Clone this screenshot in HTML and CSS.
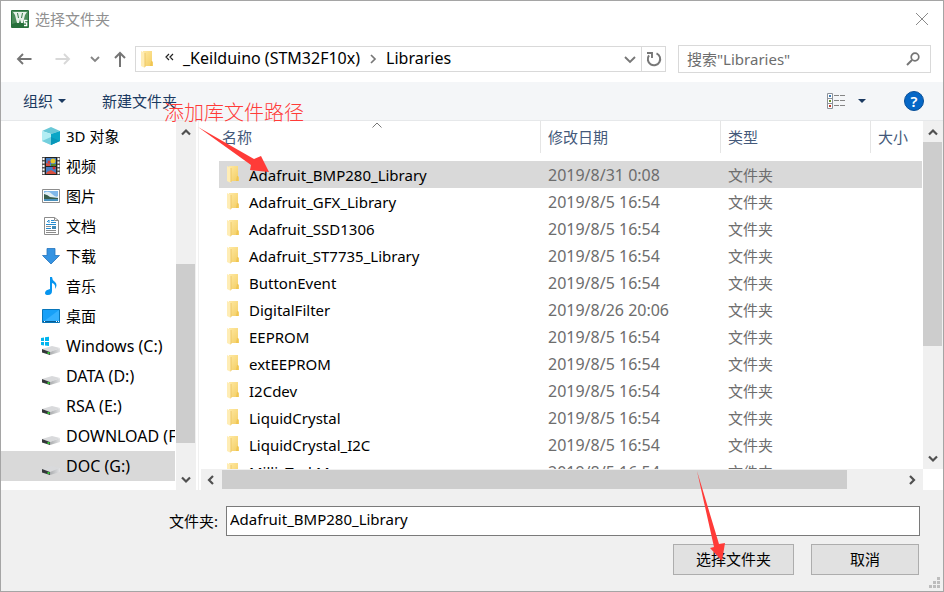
FILE: index.html
```html
<!DOCTYPE html>
<html lang="zh-CN">
<head>
<meta charset="utf-8">
<title>选择文件夹</title>
<link rel="stylesheet" href="styles.css">
</head>
<body>
<svg class="defs" aria-hidden="true">
  <defs>
    <linearGradient id="gold" x1="0" y1="0" x2="1" y2="1"><stop offset="0" stop-color="#ffe9a3"/><stop offset="1" stop-color="#f3cd62"/></linearGradient>
    <linearGradient id="metal" x1="0" y1="0" x2="1" y2="0"><stop offset="0" stop-color="#aaacae"/><stop offset="1" stop-color="#e2e3e5"/></linearGradient>
    <symbol id="folder" viewBox="0 0 14 18"><path d="M3 1h9v10l1 1v4H4z" fill="url(#gold)"/><path d="M11 11h1v5h-2z" fill="#f0c552"/><path d="M1 1l4 2v15L1 16z" fill="#ffedb5"/><path d="M5 3v14" stroke="#edc766" fill="none"/></symbol>
    <symbol id="drive" viewBox="0 0 20 20"><path d="M1 13l10-3 8 2-10 4z" fill="#d9dadc"/><path d="M9 16l10-4v4l-10 3z" fill="url(#metal)"/><path d="M1 13l8 3v3l-8-2.500z" fill="#34373a"/><path d="M6.500 16h2v2h-2z" fill="#35c935"/></symbol>
    <symbol id="up" viewBox="0 0 12 12"><path d="M2 8.500l4-4 4 4" fill="none" stroke="#505050" stroke-width="2.200"/></symbol>
    <symbol id="down" viewBox="0 0 12 12"><path d="M2 3.500l4 4 4-4" fill="none" stroke="#505050" stroke-width="2.200"/></symbol>
    <symbol id="left" viewBox="0 0 12 12"><path d="M8 2L4 6l4 4" fill="none" stroke="#505050" stroke-width="2.200"/></symbol>
    <symbol id="right" viewBox="0 0 12 12"><path d="M4 2l4 4-4 4" fill="none" stroke="#505050" stroke-width="2.200"/></symbol>
  </defs>
</svg>

<main class="dialog">
  <header class="titlebar">
    <svg class="app-icon" viewBox="0 0 18 18" aria-hidden="true"><rect width="18" height="18" rx="1" fill="#27703b"/><path d="M1 1h16v8L1 14z" fill="#4b8d5a"/><path d="M2 2h14l-2 3-2 8h-2L9 9l-1 4H6L4 5z" fill="#e8f1e9"/><path d="M6.500 3l1 5M11.500 3l-1 5" stroke="#387c49"/><path d="M16.500 10.500h-3v2.300h2.200v2.700h-2.700" fill="none" stroke="#fff" stroke-width="1.300"/></svg>
    <h1>选择文件夹</h1>
    <button class="close" aria-label="关闭"><svg viewBox="0 0 14 14"><path d="M1 1l12 12M13 1L1 13" stroke="#8a8a8a" fill="none"/></svg></button>
  </header>

  <nav class="navbar">
    <div class="history">
      <button aria-label="后退"><svg viewBox="0 0 16 14"><path d="M15.500 7H2M7 2L2 7l5 5" fill="none" stroke="#757575" stroke-width="1.900"/></svg></button>
      <button aria-label="前进"><svg viewBox="0 0 16 14"><path d="M.5 7H14M9 2l5 5-5 5" fill="none" stroke="#d8d8d8" stroke-width="1.900"/></svg></button>
      <button class="recent" aria-label="最近"><svg viewBox="0 0 10 14"><path d="M1 5l4 4 4-4" fill="none" stroke="#858585" stroke-width="1.900"/></svg></button>
      <button class="parent" aria-label="上移"><svg viewBox="0 0 12 16"><path d="M6 16V2M1 7l5-5 5 5" fill="none" stroke="#757575" stroke-width="2"/></svg></button>
    </div>
    <div class="address">
      <svg class="folder" aria-hidden="true"><use href="#folder"/></svg>
      <svg class="more" viewBox="0 0 9 8" aria-hidden="true"><path d="M4 1L1 4l3 3M8 1L5 4l3 3" fill="none" stroke="#222" stroke-width="1.200"/></svg>
      <a href="#">_Keilduino (STM32F10x)</a>
      <svg class="crumb" viewBox="0 0 8 10" aria-hidden="true"><path d="M2 1l4 4-4 4" fill="none" stroke="#777" stroke-width="1.700"/></svg>
      <a href="#">Libraries</a>
      <button class="drop" aria-label="展开"><svg viewBox="0 0 12 12"><path d="M1 4l5 5 5-5" fill="none" stroke="#777" stroke-width="1.900"/></svg></button>
      <button class="refresh" aria-label="刷新"><svg viewBox="0 0 16 16"><path d="M10.500 2.400A6.200 6.200 0 1 1 3 4.400" fill="none" stroke="#777" stroke-width="2"/><path d="M1 2h5v5" fill="none" stroke="#777" stroke-width="1.900"/></svg></button>
    </div>
    <label class="search">
      <input type="text" placeholder='搜索"Libraries"' aria-label="搜索">
      <svg viewBox="0 0 14 14" aria-hidden="true"><circle cx="9" cy="5" r="3.800" fill="none" stroke="#757575" stroke-width="1.700"/><path d="M6 8l-5 5" stroke="#757575" stroke-width="2"/></svg>
    </label>
  </nav>

  <div class="toolbar">
    <button>组织<svg class="caret" viewBox="0 0 8 4" aria-hidden="true"><path d="M0 0h8L4 4z" fill="#1b3a61"/></svg></button>
    <button>新建文件夹</button>
    <button class="view" aria-label="更改视图"><svg class="view-icon" viewBox="0 0 19 16"><path d="M.5.500h5v15h-5zM.5 5.500h5M.5 10.500h5" fill="#fff" stroke="#8c9299"/><path d="M2 2h2v2H2z" fill="#3b7cb8"/><path d="M2 7h2v2H2z" fill="#69922f"/><path d="M2 12h2v2H2z" fill="#c03a2a"/><path d="M7 2.500h5m1 0h5M7 7.500h5m1 0h5M7 12.500h5m1 0h5" stroke="#858585"/></svg><svg class="caret" viewBox="0 0 8 4"><path d="M0 0h8L4 4z" fill="#1b3a61"/></svg></button>
    <button class="help" aria-label="帮助">?</button>
  </div>

  <div class="content">
    <aside class="sidebar">
      <ul class="places">
        <li><a href="#"><svg viewBox="0 0 20 20"><path d="M1 5l9-4 9 4-9 3z" fill="#69c8d7"/><path d="M1 5l9 3v11l-9-4z" fill="#b2edf3"/><path d="M10 8l9-3v10l-9 4z" fill="#0aa6c6"/><path d="M1 15l9-4v8z" fill="#74cfdd"/><path d="M10 11l9 4-9 4z" fill="#0797ba"/></svg>3D 对象</a></li>
        <li><a href="#"><svg viewBox="0 0 20 20"><path d="M1 1h18v18H1z" fill="#555"/><path d="M4 1h12v18H4z" fill="#222"/><path d="M5 2h10v8H5zM5 11h10v7H5z" fill="#467fc5"/><path d="M5 7l4 1v2H5zM6 16l4-2 5 3v1H5z" fill="#d9503f"/><circle cx="12" cy="5" r="2.500" fill="#e5c62c"/><circle cx="8" cy="6" r="1.500" fill="#d93c34"/><path d="M10 8h5v2h-5z" fill="#55872b"/><circle cx="13" cy="12" r="1.500" fill="#d92929"/><path d="M2.500 2v17M17.500 2v17" stroke="#fff" stroke-width="2" stroke-dasharray="2 1.500"/></svg>视频</a></li>
        <li><a href="#"><svg viewBox="0 0 20 20"><path d="M1.500 3.500h17v13h-17z" fill="#fff" stroke="#8d8d8d"/><path d="M3 5h14v10H3z" fill="#80b8ea"/><path d="M3 7q4-3 8 1t6 2v3H3z" fill="#deedf4"/><path d="M3 8q4 1 6 3l8 1v1H3z" fill="#385e4d"/><path d="M3 13h14v2H3z" fill="#4a91bd"/></svg>图片</a></li>
        <li><a href="#"><svg viewBox="0 0 20 20"><path d="M3.500 1.500h10l4 3v14h-14z" fill="#fff" stroke="#8c8c8c"/><path d="M13.500 1.500v3h4" fill="none" stroke="#8c8c8c"/><path d="M6 6l2-2v3M10 4.500h3M10 6.500h5M5 8.500h10M5 12.500h5" stroke="#258bd0" fill="none"/><path d="M11 10h4v3h-4z" fill="#4089b7"/><path d="M5 10.500h5M5 14.500h10M5 16.500h10" stroke="#8b8b8b"/></svg>文档</a></li>
        <li><a href="#"><svg viewBox="0 0 20 20"><path d="M6 2.500h8v7h4.500L10 18 1.500 9.500H6z" fill="#3493e2" stroke="#2574bc" stroke-width=".8"/></svg>下载</a></li>
        <li><a href="#"><svg viewBox="0 0 20 20"><path d="M9 1h2q0 3 3 5 3 3 0 7 1-5-3-6v8q0 4-4 4-3 0-3-2 0-3 5-4z" fill="#0795ef"/></svg>音乐</a></li>
        <li><a href="#"><svg viewBox="0 0 20 20"><path d="M1.500 3.500h17v13h-17z" fill="#17a0f8" stroke="#0876ba"/><path d="M2 16L18 4v12z" fill="#35b1ff"/><path d="M2 15.500h16" stroke="#075b92"/><path d="M3 15.500h1m11 0h1m1 0h1" stroke="#fff"/></svg>桌面</a></li>
        <li class="drive"><a href="#"><svg viewBox="0 0 20 20"><use href="#drive"/><path d="M0 2l3-.5V5H0zm4-.7L8 .8V5H4zM0 6h3v3.500L0 9zm4 0h4v4l-4-.5z" fill="#00b5ef"/></svg>Windows (C:)</a></li>
        <li class="drive"><a href="#"><svg viewBox="0 0 20 20"><use href="#drive"/></svg>DATA (D:)</a></li>
        <li class="drive"><a href="#"><svg viewBox="0 0 20 20"><use href="#drive"/></svg>RSA (E:)</a></li>
        <li class="drive"><a href="#"><svg viewBox="0 0 20 20"><use href="#drive"/></svg>DOWNLOAD (F:)</a></li>
        <li class="drive selected"><a href="#"><svg viewBox="0 0 20 20"><use href="#drive"/></svg>DOC (G:)</a></li>
      </ul>
      <div class="scroll vertical places-scroll"><button aria-label="向上"><svg><use href="#up"/></svg></button><i class="before"></i><i class="thumb"></i><i class="after"></i><button aria-label="向下"><svg><use href="#down"/></svg></button></div>
    </aside>

    <section class="files">
      <div class="viewport">
        <svg class="sort" viewBox="0 0 10 6" aria-hidden="true"><path d="M.5 5.500L5 1l4.500 4.500" fill="none" stroke="#777"/></svg>
        <table>
          <thead><tr><th class="name"><span>名称</span></th><th class="date"><span>修改日期</span></th><th class="type"><span>类型</span></th><th><span>大小</span></th></tr></thead>
          <tbody>
            <tr class="selected"><td><svg class="folder"><use href="#folder"/></svg>Adafruit_BMP280_Library</td><td>2019/8/31 0:08</td><td>文件夹</td><td></td></tr>
            <tr><td><svg class="folder"><use href="#folder"/></svg>Adafruit_GFX_Library</td><td>2019/8/5 16:54</td><td>文件夹</td><td></td></tr>
            <tr><td><svg class="folder"><use href="#folder"/></svg>Adafruit_SSD1306</td><td>2019/8/5 16:54</td><td>文件夹</td><td></td></tr>
            <tr><td><svg class="folder"><use href="#folder"/></svg>Adafruit_ST7735_Library</td><td>2019/8/5 16:54</td><td>文件夹</td><td></td></tr>
            <tr><td><svg class="folder"><use href="#folder"/></svg>ButtonEvent</td><td>2019/8/5 16:54</td><td>文件夹</td><td></td></tr>
            <tr><td><svg class="folder"><use href="#folder"/></svg>DigitalFilter</td><td>2019/8/26 20:06</td><td>文件夹</td><td></td></tr>
            <tr><td><svg class="folder"><use href="#folder"/></svg>EEPROM</td><td>2019/8/5 16:54</td><td>文件夹</td><td></td></tr>
            <tr><td><svg class="folder"><use href="#folder"/></svg>extEEPROM</td><td>2019/8/5 16:54</td><td>文件夹</td><td></td></tr>
            <tr><td><svg class="folder"><use href="#folder"/></svg>I2Cdev</td><td>2019/8/5 16:54</td><td>文件夹</td><td></td></tr>
            <tr><td><svg class="folder"><use href="#folder"/></svg>LiquidCrystal</td><td>2019/8/5 16:54</td><td>文件夹</td><td></td></tr>
            <tr><td><svg class="folder"><use href="#folder"/></svg>LiquidCrystal_I2C</td><td>2019/8/5 16:54</td><td>文件夹</td><td></td></tr>
            <tr><td><svg class="folder"><use href="#folder"/></svg>MillisTaskManager</td><td>2019/8/5 16:54</td><td>文件夹</td><td></td></tr>
          </tbody>
        </table>
      </div>
      <div class="scroll vertical files-scroll"><button aria-label="向上"><svg><use href="#up"/></svg></button><i class="thumb"></i><i class="after"></i><button aria-label="向下"><svg><use href="#down"/></svg></button></div>
      <div class="scroll horizontal"><button aria-label="向左"><svg><use href="#left"/></svg></button><i class="thumb"></i><i class="after"></i><button aria-label="向右"><svg><use href="#right"/></svg></button></div>
    </section>
  </div>

  <footer class="footer">
    <div class="field"><label for="folder-name">文件夹:</label><input id="folder-name" type="text" value="Adafruit_BMP280_Library"></div>
    <div class="actions"><button class="choose">选择文件夹</button><button class="cancel">取消</button></div>
    <svg class="grip" viewBox="0 0 11 11" aria-hidden="true"><path d="M8 0h3v3H8zM4 4h3v3H4zM8 4h3v3H8zM0 8h3v3H0zM4 8h3v3H4zM8 8h3v3H8z" fill="#bdbdbd"/></svg>
  </footer>

  <p class="note">添加库文件路径</p>
  <svg class="arrow arrow-list" viewBox="0 0 72 46" aria-hidden="true"><path d="M0 0l56 32 7-3 8 16-19-2 1-5z" fill="#ff3b38"/></svg>
  <svg class="arrow arrow-button" viewBox="0 0 30 91" aria-hidden="true"><path d="M0 0l22 73 6-1-3 18-12-13 4-1z" fill="#ff3b38"/></svg>
</main>
</body>
</html>
```
FILE: styles.css
```css
* { box-sizing: border-box; }

body {
  margin: 0;
  font: 15px/20px "Noto Sans", "Noto Sans CJK SC", sans-serif;
  color: #000;
}

button, input { font: inherit; color: inherit; }
button { padding: 0; border: 0; background: none; }
a { color: inherit; text-decoration: none; }
svg { display: block; flex: none; }
.defs { position: absolute; width: 0; height: 0; }

.dialog {
  position: relative;
  display: flex;
  flex-direction: column;
  height: 100vh;
  border: 1px solid #a5a5a5;
  background: #fff;
  overflow: hidden;
}

/* Title bar */
.titlebar {
  display: flex;
  align-items: center;
  height: 36px;
  padding: 0 14px 0 10px;
}
.app-icon { width: 18px; height: 18px; }
h1 { margin: 0 auto 0 6px; font-size: 15px; font-weight: 400; color: #909090; }
.close svg { width: 14px; height: 14px; }

/* Navigation */
.navbar {
  display: flex;
  align-items: center;
  height: 45px;
  padding: 0 12px 1px 15px;
}
.history { display: flex; align-items: center; width: 119px; }
.history button { margin-right: 23px; }
.history svg { width: 16px; height: 14px; }
.history .recent { margin: 0 14px 0 -4px; }
.history .recent svg { width: 10px; }
.history .parent { margin: 0; }
.history .parent svg { width: 12px; height: 16px; }
.address {
  display: flex;
  align-items: center;
  flex: 1;
  height: 26px;
  border: 1px solid #d9d9d9;
}
.folder { width: 14px; height: 18px; }
.address .folder { margin-left: 4px; }
.address a { padding-bottom: 2px; font-size: 16px; }
.more { width: 9px; height: 8px; margin: 0 9px 4px 11px; }
.crumb { width: 8px; height: 10px; margin: 0 9px; }
.drop { margin-left: auto; padding: 0 5px; }
.drop svg { width: 12px; height: 12px; }
.refresh {
  display: flex;
  align-items: center;
  justify-content: center;
  width: 24px;
  height: 24px;
  border-left: 1px solid #d9d9d9;
}
.refresh svg { width: 16px; height: 16px; }
.search {
  display: flex;
  align-items: center;
  width: 253px;
  height: 28px;
  margin-left: 12px;
  padding: 0 10px 0 8px;
  border: 1px solid #d9d9d9;
}
.search input { flex: 1; min-width: 0; padding: 0; border: 0; outline: 0; background: none; }
.search input::placeholder { color: #6d6d6d; opacity: 1; }
.search svg { width: 14px; height: 14px; }

/* Toolbar */
.toolbar {
  display: flex;
  align-items: center;
  height: 39px;
  padding: 0 19px 0 22px;
  border-bottom: 1px solid #e6e8ea;
  background: #f4f6f8;
  color: #1b3a61;
}
.toolbar button { display: flex; align-items: center; margin-right: 36px; }
.caret { width: 8px; height: 4px; margin-left: 5px; }
.toolbar .view { margin: 0 38px 0 auto; }
.view-icon { width: 19px; height: 16px; }
.view .caret { margin-left: 12px; }
.toolbar .help {
  justify-content: center;
  width: 20px;
  height: 20px;
  margin: 0;
  border: 1px solid #084f98;
  border-radius: 50%;
  background: #0567c6;
  color: #fff;
  font-weight: 600;
}

/* Content panes */
.content { display: flex; flex: 1; min-height: 0; }
.sidebar { display: flex; width: 198px; padding-right: 2px; border-right: 1px solid #f0f0f0; }
.places { flex: 1; min-width: 0; margin: 0 1px 0 0; padding: 0; list-style: none; overflow: hidden; }
.places a {
  display: flex;
  align-items: center;
  gap: 5px;
  height: 30px;
  padding-left: 40px;
  white-space: nowrap;
}
.places svg { width: 20px; height: 20px; }
.drive { font-size: 16px; }
.selected { background: #d9d9d9; }

.files {
  display: grid;
  grid-template: minmax(0, 1fr) 21px / minmax(0, 1fr) 20px;
  flex: 1;
  min-width: 0;
  padding-left: 2px;
}
.viewport { position: relative; padding: 0 1px 0 18px; overflow: hidden; }
.sort { position: absolute; top: 1px; left: 171px; width: 10px; height: 6px; }
table { width: 100%; table-layout: fixed; border-collapse: collapse; }
th, td { padding: 0; text-align: left; font-weight: 400; white-space: nowrap; }
th { height: 40px; padding: 0 0 8px; color: #44597a; }
th span { display: block; height: 32px; padding-left: 7px; border-left: 1px solid #e5e5e5; line-height: 32px; }
.name { width: 321px; }
.name span { padding-left: 2px; border-color: transparent; }
.date { width: 180px; }
.type { width: 150px; }
td { height: 27px; padding-left: 8px; color: #6d6d6d; }
td:first-child { padding-left: 7px; color: #000; }
td:nth-child(2) { font-size: 16px; }
td .folder { float: left; margin-right: 9px; }

/* Scroll bars */
.scroll { display: flex; background: #f0f0f0; }
.vertical { flex-direction: column; width: 20px; }
.scroll button { display: flex; align-items: center; justify-content: center; flex: 0 0 21px; }
.vertical button { padding-right: 1px; }
.horizontal button { padding-right: 2px; }
.scroll svg { width: 12px; height: 12px; }
.thumb { background: #cdcdcd; }
.places-scroll .before { flex: 122; }
.places-scroll .thumb { flex: 179; margin-right: 1px; }
.places-scroll .after { flex: 26; }
.files-scroll .thumb { flex: 204; margin-right: 1px; }
.files-scroll .after { flex: 102; }
.horizontal .thumb { flex: 625; margin: 1px 0; }
.horizontal .after { flex: 55; }

/* Footer */
.footer { position: relative; padding: 16px 23px 16px 168px; background: #f0f0f0; }
.field { display: flex; align-items: center; gap: 8px; }
.field label { width: 49px; white-space: nowrap; }
.field input {
  flex: 1;
  min-width: 0;
  height: 30px;
  padding: 0 3px 4px;
  border: 1px solid #7a7a7a;
  background: #fff;
}
.actions { display: flex; justify-content: flex-end; gap: 17px; margin: 8px 1px 0 0; }
.actions button { height: 31px; padding-bottom: 2px; border: 1px solid #adadad; background: #e1e1e1; }
.choose { width: 121px; }
.cancel { width: 108px; }
.grip { position: absolute; right: 3px; bottom: 3px; width: 11px; height: 11px; }

/* Annotations drawn over the dialog */
.note {
  position: absolute;
  top: 97px;
  left: 163px;
  margin: 0;
  font: 300 20px/28px "Noto Sans CJK SC", sans-serif;
  color: #ff3b38;
}
.arrow { position: absolute; pointer-events: none; }
.arrow-list { top: 126px; left: 197px; width: 72px; height: 46px; }
.arrow-button { top: 470px; left: 696px; width: 30px; height: 91px; }
```
